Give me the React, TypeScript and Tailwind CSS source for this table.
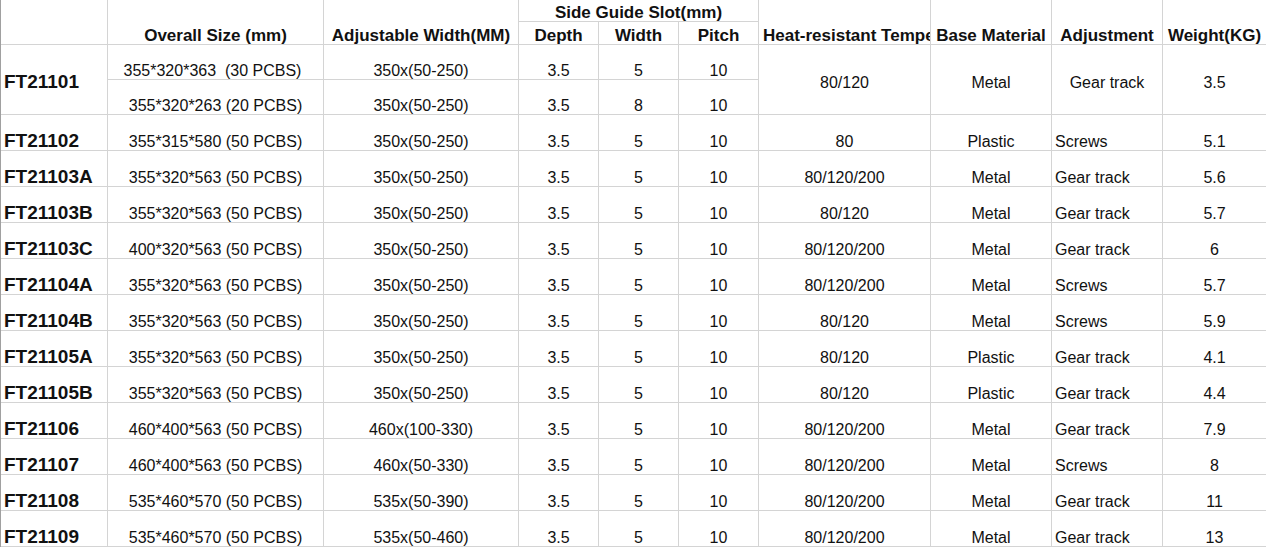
type Row = {
  id: string;
  size: string;
  adj: string;
  depth: string;
  width: string;
  pitch: string;
  heat: string;
  base: string;
  how: string;
  kg: string;
};

const rows: Row[] = [
  { id: "FT21102", size: "355*315*580 (50 PCBS)", adj: "350x(50-250)", depth: "3.5", width: "5", pitch: "10", heat: "80", base: "Plastic", how: "Screws", kg: "5.1" },
  { id: "FT21103A", size: "355*320*563 (50 PCBS)", adj: "350x(50-250)", depth: "3.5", width: "5", pitch: "10", heat: "80/120/200", base: "Metal", how: "Gear track", kg: "5.6" },
  { id: "FT21103B", size: "355*320*563 (50 PCBS)", adj: "350x(50-250)", depth: "3.5", width: "5", pitch: "10", heat: "80/120", base: "Metal", how: "Gear track", kg: "5.7" },
  { id: "FT21103C", size: "400*320*563 (50 PCBS)", adj: "350x(50-250)", depth: "3.5", width: "5", pitch: "10", heat: "80/120/200", base: "Metal", how: "Gear track", kg: "6" },
  { id: "FT21104A", size: "355*320*563 (50 PCBS)", adj: "350x(50-250)", depth: "3.5", width: "5", pitch: "10", heat: "80/120/200", base: "Metal", how: "Screws", kg: "5.7" },
  { id: "FT21104B", size: "355*320*563 (50 PCBS)", adj: "350x(50-250)", depth: "3.5", width: "5", pitch: "10", heat: "80/120", base: "Metal", how: "Screws", kg: "5.9" },
  { id: "FT21105A", size: "355*320*563 (50 PCBS)", adj: "350x(50-250)", depth: "3.5", width: "5", pitch: "10", heat: "80/120", base: "Plastic", how: "Gear track", kg: "4.1" },
  { id: "FT21105B", size: "355*320*563 (50 PCBS)", adj: "350x(50-250)", depth: "3.5", width: "5", pitch: "10", heat: "80/120", base: "Plastic", how: "Gear track", kg: "4.4" },
  { id: "FT21106", size: "460*400*563 (50 PCBS)", adj: "460x(100-330)", depth: "3.5", width: "5", pitch: "10", heat: "80/120/200", base: "Metal", how: "Gear track", kg: "7.9" },
  { id: "FT21107", size: "460*400*563 (50 PCBS)", adj: "460x(50-330)", depth: "3.5", width: "5", pitch: "10", heat: "80/120/200", base: "Metal", how: "Screws", kg: "8" },
  { id: "FT21108", size: "535*460*570 (50 PCBS)", adj: "535x(50-390)", depth: "3.5", width: "5", pitch: "10", heat: "80/120/200", base: "Metal", how: "Gear track", kg: "11" },
  { id: "FT21109", size: "535*460*570 (50 PCBS)", adj: "535x(50-460)", depth: "3.5", width: "5", pitch: "10", heat: "80/120/200", base: "Metal", how: "Gear track", kg: "13" },
];

// celulas: linha de grade clara, texto colado embaixo (como no Excel)
const line = "flex whitespace-nowrap overflow-hidden border-b border-r border-[#d4d4d4]";
const cell = `${line} items-end justify-center text-[16px] leading-[16px]`;
const head = `${line} items-end justify-center text-[17px] font-bold leading-[16px]`;
const idCell = `${line} items-end pl-[3px] text-[19px] font-bold leading-[18px]`;
const idMerged = `${line} items-center pl-[3px] pt-1 text-[19px] font-bold leading-6 row-span-2`;
const merged = `${line} items-center justify-center pt-[6px] text-[16px] leading-5 row-span-2`;

export default function App() {
  return (
    <div className="w-[1266px] h-[549px] bg-white text-[#111] font-['Liberation_Sans',Arial,sans-serif]">
      <div className="grid grid-cols-[107px_216px_195px_80px_80px_80px_172px_121px_111px_103px] grid-rows-[22px_23px_35px_35px_repeat(12,36px)] border-l border-[#a0a0a0] w-[1266px]">
        {/* cabecalho */}
        <div className={`${head} row-span-2`} />
        <div className={`${head} row-span-2`}>Overall Size (mm)</div>
        <div className={`${head} row-span-2`}>Adjustable Width(MM)</div>
        <div className={`${head} col-span-3`}>Side Guide Slot(mm)</div>
        <div className={`${head} row-span-2 justify-start pl-1`}>Heat-resistant Temperature</div>
        <div className={`${head} row-span-2`}>Base Material</div>
        <div className={`${head} row-span-2`}>Adjustment</div>
        <div className={`${head} row-span-2 border-r-0`}>Weight(KG)</div>
        <div className={head}>Depth</div>
        <div className={head}>Width</div>
        <div className={head}>Pitch</div>

        {/* FT21101 ocupa duas linhas */}
        <div className={idMerged}>FT21101</div>
        <div className={`${cell} whitespace-pre pr-[6px]`}>355*320*363  (30 PCBS)</div>
        <div className={cell}>350x(50-250)</div>
        <div className={cell}>3.5</div>
        <div className={cell}>5</div>
        <div className={cell}>10</div>
        <div className={merged}>80/120</div>
        <div className={merged}>Metal</div>
        <div className={merged}>Gear track</div>
        <div className={`${merged} border-r-0`}>3.5</div>
        <div className={cell}>355*320*263 (20 PCBS)</div>
        <div className={cell}>350x(50-250)</div>
        <div className={cell}>3.5</div>
        <div className={cell}>8</div>
        <div className={cell}>10</div>

        {rows.map((r) => (
          <div key={r.id} className="contents">
            <div className={idCell}>{r.id}</div>
            <div className={cell}>{r.size}</div>
            <div className={cell}>{r.adj}</div>
            <div className={cell}>{r.depth}</div>
            <div className={cell}>{r.width}</div>
            <div className={cell}>{r.pitch}</div>
            <div className={cell}>{r.heat}</div>
            <div className={cell}>{r.base}</div>
            <div className={`${cell} justify-start pl-[3px]`}>{r.how}</div>
            <div className={`${cell} border-r-0`}>{r.kg}</div>
          </div>
        ))}
      </div>
    </div>
  );
}
